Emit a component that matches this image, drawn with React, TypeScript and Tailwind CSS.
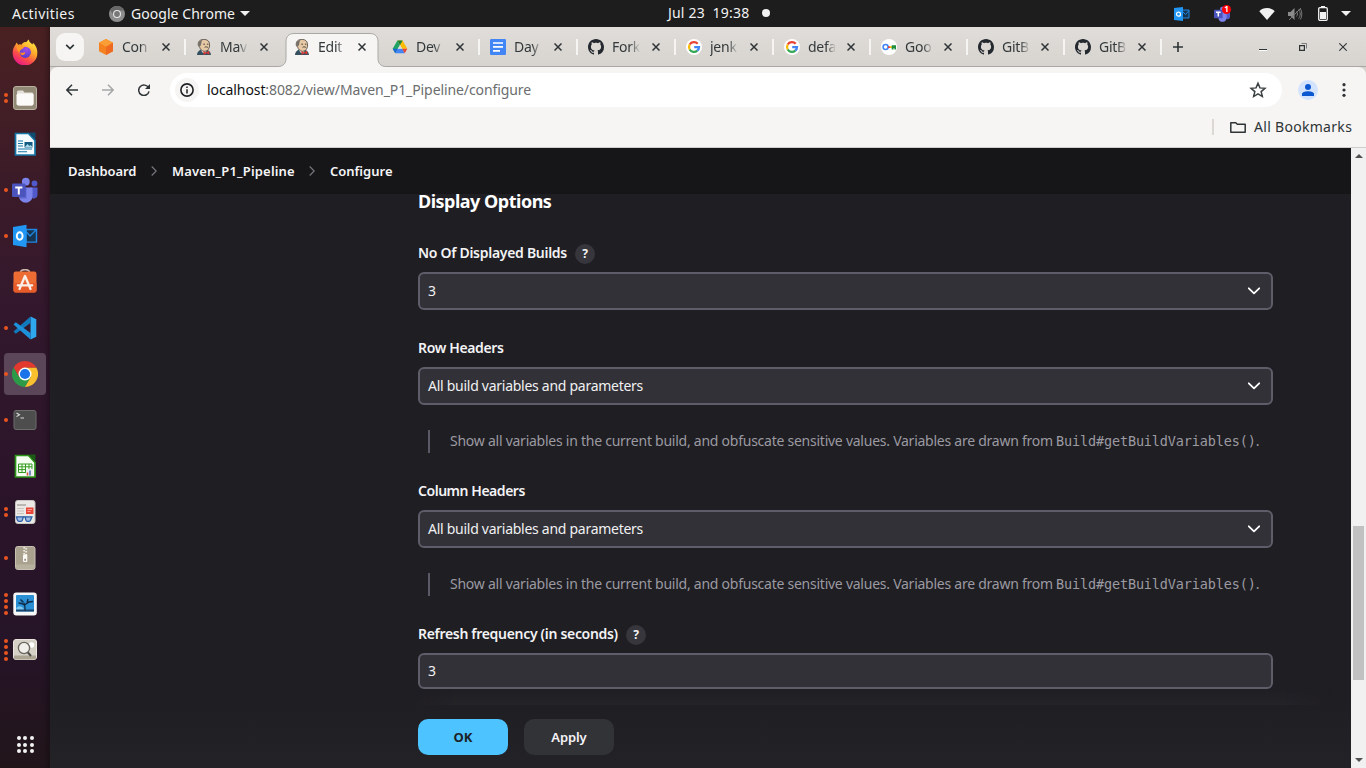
import type { ReactNode } from "react";

/* ---------- favicons ---------- */

const CubeIcon = () => (
  <svg viewBox="0 0 16 16" className="size-4">
    <path d="M8 0l7 3.8v8.4L8 16l-7-3.8V3.8z" fill="#f58220" />
    <path d="M8 0l7 3.8L8 7.8 1 3.8z" fill="#fb9d35" />
    <path d="M8 7.8l7-4v8.4L8 16z" fill="#ef6a21" />
  </svg>
);

const JenkinsIcon = () => (
  <svg viewBox="0 0 16 16" className="size-4">
    <path d="M1 16c0-2.500 1.500-4.500 4-5.500h5c3 .8 4.800 2.500 5 5.500z" fill="#35505f" />
    <path d="M5 10.500l1 2.500 3 2 2-4z" fill="#f4efe8" />
    <path d="M3 7.500C1.800 6.500 1.900 3.600 3.300 2 4.600.7 6.300.3 8.200.4c3 .1 5 1.600 5.300 4.400.2 1.700.1 3-.5 4.300-.8 2-2.300 3.200-4.500 3.200-2.600 0-4.300-2.300-4.800-4z" fill="#e6c9a4" stroke="#4a433c" strokeWidth=".8" />
    <path d="M3.300 7.800C2 6 2.200 3.700 3.500 2.200c1-.9 2-1.300 3.200-1.300C5.200 2.200 5.600 3.700 5.200 5c-.2 1-.6 2-1.400 2.500z" fill="#76706a" />
    <path d="M7.300 5.200H9M10.900 5.200h1.500M8.600 8.300c1-.6 2.200-.6 3.300.1" stroke="#4a433c" strokeWidth="1" fill="none" />
    <path d="M7.300 12l2.700 1.500 3-1.700.5 3.600-3.200-1.100-2.600 1.600z" fill="#d33833" />
  </svg>
);

const DriveIcon = () => (
  <svg viewBox="0 0 16 16" className="size-4">
    <path d="M5.400 1.500L8 6 3.300 14.200.7 9.800z" fill="#1ea362" />
    <path d="M10.600 1.500l4.700 8.300h-5.100L5.500 1.500z" fill="#fbbc04" />
    <path d="M5.400 1.500L8 6l2.600-4.500z" fill="#188038" />
    <path d="M.7 9.800h5.100l-2.500 4.400z" fill="#1967d2" />
    <path d="M5.700 9.800h4.600l2.400 4.400H3.300z" fill="#4285f4" />
    <path d="M10.200 9.800h5.100l-2.600 4.400z" fill="#ea4335" />
    <path d="M8 6l2.200 3.800H5.700z" fill="#dedbd7" />
  </svg>
);

const DocsIcon = () => (
  <svg viewBox="0 0 16 16" className="size-4">
    <rect width="16" height="16" rx="1.300" fill="#4285f4" />
    <path d="M3 4h10M3 7.900h10M3 11.800h7" stroke="#fff" strokeWidth="1.700" />
  </svg>
);

const GithubIcon = () => (
  <svg viewBox="0 0 16 16" className="size-4" fill="#24292f">
    <path d="M8 0C3.580 0 0 3.580 0 8c0 3.540 2.290 6.530 5.470 7.590.4.070.55-.17.55-.38 0-.19-.01-.82-.01-1.490-2.010.37-2.530-.49-2.690-.94-.09-.23-.48-.94-.82-1.130-.28-.15-.68-.52-.01-.53.63-.01 1.080.58 1.230.82.72 1.210 1.870.87 2.330.66.07-.52.28-.87.51-1.070-1.780-.2-3.640-.89-3.640-3.950 0-.87.31-1.590.82-2.150-.08-.2-.36-1.020.08-2.120 0 0 .67-.21 2.200.82.64-.18 1.320-.27 2-.27s1.360.09 2 .27c1.530-1.040 2.200-.82 2.200-.82.44 1.100.16 1.920.08 2.120.51.56.82 1.270.82 2.150 0 3.070-1.870 3.750-3.650 3.950.29.25.54.73.54 1.480 0 1.070-.01 1.930-.01 2.200 0 .21.15.46.55.38A8.010 8.010 0 0 0 16 8c0-4.420-3.580-8-8-8z" />
  </svg>
);

const GoogleIcon = () => (
  <svg viewBox="0 0 16 16" className="size-4">
    <circle cx="8" cy="8" r="8" fill="#fff" />
    <g fill="none" strokeWidth="2.300">
      <path d="M11.700 4.800A5 5 0 0 0 3.700 5.500" stroke="#ea4335" />
      <path d="M3.700 5.500a5 5 0 0 0 0 5" stroke="#fbbc05" />
      <path d="M3.700 10.500a5 5 0 0 0 7.600 1.200" stroke="#34a853" />
      <path d="M11.300 11.700A5 5 0 0 0 13 8.100H8.200" stroke="#4285f4" />
    </g>
  </svg>
);

const KeyIcon = () => (
  <svg viewBox="0 0 16 16" className="size-4">
    <circle cx="8" cy="8" r="8" fill="#fff" />
    <circle cx="4.600" cy="8" r="2.500" fill="none" stroke="#4285f4" strokeWidth="1.600" />
    <path d="M7 7.200h2v1.700H7z" fill="#ea4335" />
    <path d="M9 7.200h2v1.700H9z" fill="#fbbc05" />
    <path d="M10.700 6.300h4.300v4.200h-1.500V9.300h-1v1.200h-1.800z" fill="#1e8e3e" />
  </svg>
);

const CloseIcon = () => (
  <svg viewBox="0 0 8 8" className="size-2 shrink-0">
    <path d="M.5.5l7 7M7.500.5l-7 7" stroke="#2e3436" strokeWidth="1.500" />
  </svg>
);

/* ---------- dock icons, drawn on a 26px grid ---------- */

const Dock26 = ({ children }: { children: ReactNode }) => (
  <svg viewBox="0 0 26 26" className="size-[26px]">{children}</svg>
);

const Teams = () => (
  <Dock26>
    <circle cx="22.500" cy="6.500" r="2.900" fill="#5059c9" />
    <path d="M18 10.500h7.500v7a3.800 3.800 0 0 1-7.500 1z" fill="#5059c9" />
    <circle cx="13.800" cy="4.700" r="3.900" fill="#7b83eb" />
    <path d="M7 10.500h13.500V19a6.700 6.700 0 0 1-13.500 0z" fill="#7b83eb" />
    <path d="M7 10.500h7.500v11H8z" fill="#5d65cf" />
    <rect x="0" y="6.500" width="13.500" height="13.500" rx="1.300" fill="#4b53bc" />
    <path d="M3.200 9.500h7.200v1.900H7.800v6H5.800v-6H3.200z" fill="#fff" />
  </Dock26>
);

const Outlook = () => (
  <Dock26>
    <path d="M14 6.500h10.500v12.600H14z" fill="#173450" stroke="#1e88e5" strokeWidth="1.400" />
    <path d="M14 8.500l4 4.500 6-6" stroke="#1e88e5" strokeWidth="1.300" fill="none" />
    <path d="M1 4l13.500-2.200v22.400L1 22z" fill="#2196f3" />
    <ellipse cx="7.700" cy="13" rx="2.900" ry="3.700" fill="none" stroke="#fff" strokeWidth="1.900" />
  </Dock26>
);

const Firefox = () => (
  <Dock26>
    <defs>
      <linearGradient id="ffx" x1=".85" y1=".05" x2=".3" y2="1">
        <stop offset="0" stopColor="#ffee45" />
        <stop offset=".4" stopColor="#ffa62a" />
        <stop offset=".7" stopColor="#fb4b4b" />
        <stop offset="1" stopColor="#e8178a" />
      </linearGradient>
      <radialGradient id="ffc" cx=".6" cy=".2" r=".9">
        <stop offset="0" stopColor="#a34ce8" />
        <stop offset="1" stopColor="#473bc8" />
      </radialGradient>
    </defs>
    <path d="M3 6.500l1.700-3 1.500 2.400c1-.4 2.200-.5 3.300-.2C11 3 13 2.500 14.300 3.200 15 2 15.800 1 16.800.4c.2 2.600 2.200 3.600 3.900 5l.2-1.700c3 2.800 4.700 6.400 4.400 10.300A12.300 12.300 0 0 1 .7 14.300C.5 11.400 1.400 8.700 3 6.500z" fill="url(#ffx)" />
    <circle cx="13.300" cy="13.300" r="5.600" fill="url(#ffc)" />
    <path d="M6.200 6c2.200-.8 5 .1 5.800 1.700-.1 1.500-1.600 2-3 3-.8.700-1.500 1.500-1.200 3C5 12 4.500 8.500 6.200 6z" fill="#ff9a26" />
    <path d="M6.500 12c1.300 2 3.500 2.500 6.500 1 .5 1.500-.8 3.200-3.200 3.300" fill="#ff8a2a" />
  </Dock26>
);

const Files = () => (
  <Dock26>
    <rect x="1.500" y="1.500" width="23" height="23" rx="2.500" fill="#918876" stroke="#b9b19f" />
    <path d="M5 7a1.500 1.500 0 0 1 1.500-1.500h4.500l1.500 2h7.500A1.500 1.500 0 0 1 21.500 9v9.500a2 2 0 0 1-2 2h-12a2 2 0 0 1-2-2z" fill="#e3dfd8" />
    <rect x="4.500" y="8.500" width="17" height="12" rx="1.800" fill="#fbfaf8" />
  </Dock26>
);

const Writer = () => (
  <Dock26>
    <path d="M3.500 2.500h13l6.500 7v14.500H3.500z" fill="#f5fbff" stroke="#1577a8" strokeWidth="1.700" />
    <path d="M17 1.500h6.500v7.500z" fill="#0e4d70" />
    <path d="M6 10h5M6 12.500h5M6 15h5M6 18h14M6 20.800h9" stroke="#1577a8" strokeWidth="1.100" />
    <rect x="12.500" y="11" width="8" height="5.500" fill="#145b82" />
    <path d="M13 16l2.500-3 2 2 1-1 2 2z" fill="#a9d9ef" />
  </Dock26>
);

const Software = () => (
  <Dock26>
    <path d="M8.500 3.500c0-3.800 9-3.800 9 0" fill="none" stroke="#c8b7a8" strokeWidth="1.600" />
    <rect x="1.500" y="2.500" width="23" height="21" rx="2.200" fill="#ed6c34" />
    <path d="M1.500 14h23v7.500a2 2 0 0 1-2 2h-19a2 2 0 0 1-2-2z" fill="#e65b29" />
    <path d="M7.500 20L13 7l5.500 13M5.800 16.300h14.400" stroke="#fbeee8" strokeWidth="2.300" fill="none" strokeLinecap="round" strokeLinejoin="round" />
  </Dock26>
);

const VsCode = () => (
  <Dock26>
    <path d="M18.500 1.500l5.800 2.700v17.600l-5.800 2.700z" fill="#2fa7ee" />
    <path d="M18.500 1.500L1.500 16.500l2.300 2.200L18.500 8z" fill="#1279bd" />
    <path d="M18.500 24.500L1.500 9.500l2.300-2.200L18.500 18z" fill="#1d92db" />
  </Dock26>
);

const Chrome = () => (
  <Dock26>
    <path d="M1.740 6.500A13 13 0 0 0 13 26l5.630-9.700L13 13 7.400 16.300z" fill="#2d9a48" />
    <path d="M13 6.500h11.260A13 13 0 0 1 13 26l5.630-9.700z" fill="#fbc02d" />
    <path d="M13 6.500h11.260A13 13 0 0 0 1.740 6.500l5.630 9.750z" fill="#e23a2e" />
    <circle cx="13" cy="13" r="6.500" fill="#fff" />
    <circle cx="13" cy="13" r="5.100" fill="#1a73e8" />
  </Dock26>
);

const TerminalApp = () => (
  <Dock26>
    <rect x="2" y="3.500" width="22" height="19" rx="2" fill="#4d4d4d" stroke="#6c6c6c" />
    <path d="M4.500 6l3 1.800-3 1.800M8.500 11h3.500" stroke="#dcdcdc" strokeWidth="1.100" fill="none" />
  </Dock26>
);

const Calc = () => (
  <Dock26>
    <path d="M3.500 2.500h13l6.500 7v14.500H3.500z" fill="#f5fff2" stroke="#2c9418" strokeWidth="1.700" />
    <path d="M17 1.500h6.500v7.500z" fill="#1d5c14" />
    <path d="M6.500 11h13.500v8.500H6.500zM6.500 13.800H20M6.500 16.600H20M10 11v8.500M13.500 11v8.500M17 11v8.500" stroke="#339b20" strokeWidth="1" fill="none" />
    <rect x="14" y="16" width="7" height="7" fill="#eee" />
    <path d="M15.500 22.500v-3" stroke="#d4572a" strokeWidth="1.500" />
    <path d="M18 22.500v-5" stroke="#4472b8" strokeWidth="1.500" />
  </Dock26>
);

const DocViewer = () => (
  <Dock26>
    <rect x="3.500" y="1.500" width="19.500" height="23" rx="2.200" fill="#ebe9e6" stroke="#c9c5c0" />
    <path d="M5 9.500h7M5 12h7M5 14.500h7" stroke="#c8c4bf" strokeWidth="1.100" />
    <path d="M5 6h9" stroke="#aaa59f" strokeWidth="1.500" />
    <rect x="14" y="8.500" width="7.500" height="6.500" fill="#ea4438" />
    <path d="M15.500 10.500h4.500M15.500 12.500h3" stroke="#ffb4ab" strokeWidth=".8" />
    <path d="M4.500 17.800h6.700l-.7 3a2 2 0 0 1-2 1.500H7.300a2 2 0 0 1-2-1.500zM13.200 17.800h6.700l-1.200 3a2 2 0 0 1-2 1.500h-1.200a2 2 0 0 1-1.700-1.500z" fill="#9dbbe2" stroke="#2b5fa5" strokeWidth="1.300" />
    <path d="M11 18h2.400" stroke="#2b5fa5" strokeWidth="1.300" />
  </Dock26>
);

const Archive = () => (
  <Dock26>
    <rect x="3.500" y="1.500" width="19.500" height="23" rx="2.200" fill="#aaa28f" stroke="#c9c2b2" />
    <path d="M4 19.500h18.500v2.500a2 2 0 0 1-2 2H6a2 2 0 0 1-2-2z" fill="#b8b19f" />
    <path d="M12.200 2v8M14.200 3v7" stroke="#f0ece2" strokeWidth="1.800" strokeDasharray="1.500 1.500" />
    <rect x="11" y="9.500" width="4.300" height="7.500" rx="1" fill="#fbfaf7" />
    <rect x="12.300" y="13.800" width="1.700" height="2" fill="#999180" />
  </Dock26>
);

const ImageViewer = () => (
  <Dock26>
    <rect x="1.300" y="1.500" width="23.500" height="23" rx="3" fill="#f7f7f7" />
    <rect x="4" y="4" width="18" height="16.500" rx=".8" fill="#2b8fd6" />
    <path d="M4 19c0-5 7-5 8 0z" fill="#7cc6f0" />
    <path d="M4 18.500h18v2H4z" fill="#17456d" />
    <path d="M13 19.500c.2-4 0-5-1-7.500M12.500 14l4.500-3 4-.5M12.500 14c-2-1.500-3-2-6-2M11.500 11.500l-3-3M15 12.300l1-4.300" stroke="#102b45" strokeWidth="1.400" fill="none" />
  </Dock26>
);

const Magnifier = () => (
  <Dock26>
    <rect x="1.500" y="2.500" width="23" height="20" rx="2.500" fill="#d5d1c7" stroke="#eae6df" />
    <path d="M2 18.500h22v2a2 2 0 0 1-2 2H4a2 2 0 0 1-2-2z" fill="#aca592" />
    <circle cx="19.500" cy="8" r="2.800" fill="#fff" />
    <path d="M15.500 15l3.500 4" stroke="#4d4b46" strokeWidth="1.900" />
    <circle cx="12" cy="11" r="5.600" fill="#f1efe9" stroke="#68665f" strokeWidth="1.300" />
  </Dock26>
);

/* ---------- shell ---------- */

const dockItems: { icon: ReactNode; dots: number; active?: boolean }[] = [
  { icon: <Firefox />, dots: 0 },
  { icon: <Files />, dots: 2 },
  { icon: <Writer />, dots: 0 },
  { icon: <Teams />, dots: 1 },
  { icon: <Outlook />, dots: 1 },
  { icon: <Software />, dots: 0 },
  { icon: <VsCode />, dots: 1 },
  { icon: <Chrome />, dots: 1, active: true },
  { icon: <TerminalApp />, dots: 1 },
  { icon: <Calc />, dots: 0 },
  { icon: <DocViewer />, dots: 2 },
  { icon: <Archive />, dots: 1 },
  { icon: <ImageViewer />, dots: 4 },
  { icon: <Magnifier />, dots: 4 },
];

function Dock() {
  return (
    <aside className="flex w-[50px] shrink-0 flex-col bg-[linear-gradient(#4a2122,#3c1b28_20%,#33182d_38%,#2a1429_65%,#261428_82%,#21151a)] pt-[2px] shadow-[inset_-6px_0_6px_-4px_rgba(0,0,0,0.35)]">
      {dockItems.map((item, i) => (
        <div key={i} className="relative flex h-[46px] shrink-0 items-center justify-center">
          <div className={item.active ? "flex size-[42px] items-center justify-center rounded-[4px] bg-[#5a4559]" : "flex size-[42px] items-center justify-center"}>
            {item.icon}
          </div>
          <div className="absolute inset-y-0 left-1 flex flex-col items-center justify-center gap-[1.700px]">
            {Array.from({ length: item.dots }, (_, d) => (
              <span key={d} className="size-[4px] rounded-full bg-[#e95420]" />
            ))}
          </div>
        </div>
      ))}
      <div className="mt-[63px] grid grid-cols-[repeat(3,4px)] justify-center gap-[2.500px]">
        {Array.from({ length: 9 }, (_, d) => (
          <span key={d} className="size-[4px] rounded-full bg-[#f2f2f2]" />
        ))}
      </div>
    </aside>
  );
}

function TopBar() {
  return (
    <header className="grid h-[27px] shrink-0 grid-cols-[1fr_auto_1fr] items-center bg-[#1d1d1d] text-[14px] leading-[26px] text-[#f2f2f2]">
      <div className="flex items-center pl-3">
        <span className="w-[97px] tracking-[0.450px]">Activities</span>
        <svg viewBox="0 0 16 16" className="size-4">
          <circle cx="8" cy="8" r="8" fill="#8d8d8d" />
          <path d="M8 4.500h7.200A8 8 0 0 0 1.200 4L5 10z" fill="#686868" />
          <circle cx="8" cy="8" r="4" fill="#e8e8e8" />
          <circle cx="8" cy="8" r="2.900" fill="#777" />
        </svg>
        <span className="ml-[6px] w-[106px] tracking-[0.050px]">Google Chrome</span>
        <svg viewBox="0 0 10 5" className="ml-[3px] h-[5px] w-[10px]"><path d="M0 0h10L5 5z" fill="#f2f2f2" /></svg>
      </div>
      <div className="flex items-center gap-3 pb-px pl-[72px]">
        <span className="w-[82px] whitespace-pre tracking-[0.200px]">Jul 23  19:38</span>
        <span className="size-2 rounded-full bg-[#f2f2f2]" />
      </div>
      <div className="flex items-center justify-end pr-[15px]">
        <svg viewBox="0 0 16 14" className="h-[14px] w-4">
          <path d="M8 3h7v8H8z" fill="#15344f" stroke="#1e88e5" />
          <path d="M8.500 4.500l3 3 3.500-4" stroke="#1e88e5" fill="none" />
          <path d="M0 1l9-1v14l-9-1z" fill="#2196f3" />
          <circle cx="4.500" cy="7.200" r="2" fill="none" stroke="#fff" strokeWidth="1.200" />
        </svg>
        <div className="relative ml-6 h-4 w-4">
          <svg viewBox="0 0 26 26" className="size-4">
            <path d="M18 10.500h8v7a3.800 3.800 0 0 1-7.500 1z" fill="#5059c9" />
            <circle cx="13.800" cy="5" r="3.900" fill="#7b83eb" />
            <path d="M7 9.500h13.500V19a6.700 6.700 0 0 1-13.500 0z" fill="#7b83eb" />
            <rect y="6" width="14" height="14" rx="1.300" fill="#4b53bc" />
            <path d="M3.200 9h7.600v2.200H8.200v6H5.800v-6H3.200z" fill="#fff" />
          </svg>
          <span className="absolute -top-[1px] left-2 flex size-[9px] items-center justify-center rounded-full bg-[#f00] text-[8px] leading-none font-bold text-white">1</span>
        </div>
        <svg viewBox="0 0 16 12" className="ml-[29px] h-3 w-4"><path d="M.3 3.200C4-1 12-1 15.700 3.200L8 12z" fill="#f2f2f2" /></svg>
        <svg viewBox="0 0 16 14" className="ml-3 h-[14px] w-4">
          <path d="M1 5h2.500L7.500 1v12l-4-4H1z" fill="#8b8b8b" />
          <path d="M9.500 4.500c1.300 1.500 1.300 3.500 0 5M11.500 2.500c2.300 2.500 2.300 6.500 0 9M13.300 1.500c2 3 2 8 0 11M2 13L14 1" stroke="#777" fill="none" />
        </svg>
        <svg viewBox="0 0 10 15" className="ml-[15px] h-[15px] w-[10px]">
          <rect x=".7" y="1.700" width="8.600" height="12.600" rx="1.200" fill="none" stroke="#f2f2f2" strokeWidth="1.300" />
          <path d="M3 0h4v2H3zM2 6h6v7H2z" fill="#f2f2f2" />
        </svg>
        <svg viewBox="0 0 10 5" className="ml-[13px] h-[5px] w-[10px]"><path d="M0 0h10L5 5z" fill="#f2f2f2" /></svg>
      </div>
    </header>
  );
}

const tabs: { icon: ReactNode; title: string; active?: boolean; line?: boolean }[] = [
  { icon: <CubeIcon />, title: "Con", line: true },
  { icon: <JenkinsIcon />, title: "Mav" },
  { icon: <JenkinsIcon />, title: "Edit", active: true },
  { icon: <DriveIcon />, title: "Dev", line: true },
  { icon: <DocsIcon />, title: "Day", line: true },
  { icon: <GithubIcon />, title: "Fork", line: true },
  { icon: <GoogleIcon />, title: "jenk", line: true },
  { icon: <GoogleIcon />, title: "defa", line: true },
  { icon: <KeyIcon />, title: "Goo", line: true },
  { icon: <GithubIcon />, title: "GitB", line: true },
  { icon: <GithubIcon />, title: "GitB", line: true },
];

function TabStrip() {
  return (
    <div className="flex h-10 shrink-0 items-center border-b border-[#aaa8a5] bg-linear-to-b from-[#e0ddda] to-[#d7d4cf] pl-[6px] text-[14px] text-[#33393b]">
      <div className="flex size-7 items-center justify-center rounded-[9px] bg-[#f6f5f4]">
        <svg viewBox="0 0 10 6" className="h-[6px] w-[10px]"><path d="M1.200 .8L5 4.500 8.800 .8" stroke="#2e3436" strokeWidth="1.700" fill="none" /></svg>
      </div>
      <div className="ml-1 flex h-full">
        {tabs.map((t, i) => (
          <div key={i} className={i < 7 ? "relative flex h-full w-[98px] items-center pl-[10px]" : "relative flex h-full w-[97px] items-center pl-[10px]"}>
            {t.active && (
              <svg viewBox="0 0 108 34" className="absolute top-[6px] -left-[6px] h-[34px] w-[108px]">
                <path d="M0 33.500c5 0 8-3 8-8V8.500c0-5 3-8 8-8h76c5 0 8 3 8 8v17c0 5 3 8 8 8V34H0z" fill="#f6f5f4" />
                <path d="M0 33.500c5 0 8-3 8-8V8.500c0-5 3-8 8-8h76c5 0 8 3 8 8v17c0 5 3 8 8 8" fill="none" stroke="#aaa8a5" />
              </svg>
            )}
            <span className="relative">{t.icon}</span>
            <span className="relative ml-2 w-[28px] overflow-hidden whitespace-nowrap tracking-[-0.250px] mask-r-from-65% mask-r-to-100%">{t.title}</span>
            <span className={i < 7 ? "relative ml-3 flex" : "relative ml-[11px] flex"}><CloseIcon /></span>
            {t.line && <span className="ml-auto h-4 w-[2px] bg-[#f6f5f4]" />}
          </div>
        ))}
      </div>
      <svg viewBox="0 0 10 10" className="ml-[11px] size-[10px]"><path d="M5 0v10M0 5h10" stroke="#2e3436" strokeWidth="1.600" /></svg>
      <div className="ml-auto flex items-center pr-[19px]">
        <svg viewBox="0 0 8 8" className="size-2"><path d="M0 6.500h8" stroke="#2e3436" /><path d="M0 7.500h8" stroke="#fff" /></svg>
        <svg viewBox="0 0 8 8" className="ml-8 size-2"><path d="M.6 2.600h4.800v4.800H.6z" fill="none" stroke="#2e3436" strokeWidth="1.200" /><path d="M2.500.5h5v5" fill="none" stroke="#7c7f80" /></svg>
        <svg viewBox="0 0 8 8" className="ml-8 size-2"><path d="M.3.3l7.400 7.400M7.700.3L.3 7.700" stroke="#2e3436" strokeWidth="1.100" /></svg>
      </div>
    </div>
  );
}

function Toolbar() {
  return (
    <div className="bg-[#d7d4cf]">
      <div className="flex h-[46px] shrink-0 items-center rounded-t-[8px] bg-[#f6f5f4] pr-5 pl-4">
        <svg viewBox="0 0 12 12" className="size-3"><path d="M12 6H1M6 .8L.9 6 6 11.200" stroke="#2e3436" strokeWidth="1.500" fill="none" /></svg>
        <svg viewBox="0 0 12 12" className="ml-6 size-3"><path d="M0 6h11M6 .8L11.100 6 6 11.200" stroke="#a5a6a6" strokeWidth="1.500" fill="none" /></svg>
        <svg viewBox="0 0 12 12" className="ml-6 size-3"><path d="M10.600 4A5.200 5.200 0 1 0 11 7.300" stroke="#2e3436" strokeWidth="1.500" fill="none" /><path d="M12 0v5H7z" fill="#2e3436" /></svg>
        <div className="ml-5 flex h-[34px] flex-1 items-center rounded-full bg-white pr-[15px] pl-[5px]">
          <span className="flex size-6 items-center justify-center rounded-full bg-[#f6f5f4]">
            <svg viewBox="0 0 14 14" className="size-[14px]"><circle cx="7" cy="7" r="6.100" fill="none" stroke="#202124" strokeWidth="1.600" /><path d="M7 6.200v4.300M7 3.400v1.700" stroke="#202124" strokeWidth="1.500" /></svg>
          </span>
          <span className="ml-2 pb-[2px] text-[14px] tracking-[-0.090px] whitespace-nowrap text-[#6b6d6e]"><span className="text-[#101213]">localhost</span>:8082/view/Maven_P1_Pipeline/configure</span>
          <svg viewBox="0 0 24 24" className="ml-auto size-[18px]" fill="none" stroke="#3a3f41" strokeWidth="2"><path d="M12 3l2.600 6.200 6.700.5-5.100 4.400 1.600 6.600L12 17.200l-5.800 3.500 1.600-6.600-5.100-4.400 6.700-.5z" /></svg>
        </div>
        <span className="ml-4 flex size-5 items-center justify-center rounded-full bg-[#d3e3fd]">
          <svg viewBox="0 0 12 12" className="size-3" fill="#0b57d0"><circle cx="6" cy="3" r="3" /><path d="M0 12V9.800C0 8 3.500 7.200 6 7.200S12 8 12 9.800V12z" /></svg>
        </span>
        <svg viewBox="0 0 4 14" className="ml-6 h-[14px] w-1" fill="#2e3436"><circle cx="2" cy="1.700" r="1.600" /><circle cx="2" cy="7" r="1.600" /><circle cx="2" cy="12.300" r="1.600" /></svg>
      </div>
    </div>
  );
}

function BookmarksBar() {
  return (
    <div className="flex h-[35px] shrink-0 items-center justify-end border-b border-[#cfcdca] bg-[#f6f5f4] pr-[14px] pb-[7px] text-[14px] text-[#2e3436]">
      <span className="h-4 w-[2px] bg-[#dcd9d5]" />
      <svg viewBox="0 0 16 12" className="ml-4 h-3 w-4"><path d="M.8 10V1.700h5L7.300 3.200h7.900v8H.8z" fill="none" stroke="#2e3436" strokeWidth="1.500" strokeLinejoin="round" /></svg>
      <span className="ml-2 w-[98px] whitespace-nowrap tracking-[0.300px]">All Bookmarks</span>
    </div>
  );
}

/* ---------- Jenkins page ---------- */

const Crumb = () => (
  <svg viewBox="0 0 6 10" className="h-[10px] w-[6px]"><path d="M.7.5L5.200 5 .7 9.500" stroke="#76767c" strokeWidth="1.200" fill="none" /></svg>
);

function Label({ text, help, className }: { text: string; help?: boolean; className: string }) {
  return (
    <div className="mb-[9px] flex h-5 items-center">
      <span className={"text-[14px] leading-5 font-semibold whitespace-nowrap text-[#f3f3f5] " + className}>{text}</span>
      {help && <span className="mt-[2px] ml-2 flex size-5 shrink-0 items-center justify-center rounded-full bg-[#37363c] text-[12px] font-bold text-[#f3f3f5]">?</span>}
    </div>
  );
}

function Select({ value }: { value: string }) {
  return (
    <div className="flex h-[38px] items-center justify-between rounded-[6px] border-2 border-[#5e5d69] bg-[#323137] pr-[11px] pl-2 text-[14px] text-[#f0f0f2]">
      <span className="pb-[2px] tracking-[-0.270px]">{value}</span>
      <svg viewBox="0 0 12 8" className="h-2 w-3"><path d="M.8 1.300L6 6.300l5.200-5" stroke="#fff" strokeWidth="1.800" fill="none" strokeLinecap="round" strokeLinejoin="round" /></svg>
    </div>
  );
}

function Help() {
  return (
    <div className="mt-[25px] ml-[10px] flex h-[23px] items-center border-l-2 border-[#5a5965] pb-[2px] pl-5 text-[14px] whitespace-nowrap text-[#9b9aa1]">
      <span className="w-[606px] tracking-[-0.250px]">Show all variables in the current build, and obfuscate sensitive values. Variables are drawn from</span>
      <code className="pt-[2px] font-['DejaVu_Sans_Mono',monospace] text-[13.500px] tracking-[-0.140px]">Build#getBuildVariables()</code>.
    </div>
  );
}

function Page() {
  return (
    <div className="flex min-h-0 flex-1">
      <main className="flex min-w-0 flex-1 flex-col bg-[#1f1e23]">
        <nav className="flex h-[46px] shrink-0 items-center gap-[15px] bg-[#161618] pl-[18px] text-[13px] font-semibold whitespace-nowrap text-[#f5f5f7]">
          <span className="w-[68px] pt-px tracking-[-0.080px]">Dashboard</span>
          <Crumb />
          <span className="w-[122px] pt-px tracking-[0.180px]">Maven_P1_Pipeline</span>
          <Crumb />
          <span className="pt-px">Configure</span>
        </nav>
        <div className="flex h-[511px] shrink-0 flex-col pr-[78px] pl-[368px]">
          <h2 className="mb-[33px] h-4 text-[18px] leading-[15px] font-bold tracking-[-0.500px] whitespace-nowrap text-white">Display Options</h2>
          <Label text="No Of Displayed Builds" help className="w-[149px] tracking-[-0.290px]" />
          <Select value="3" />
          <div className="h-7" />
          <Label text="Row Headers" className="tracking-[-0.360px]" />
          <Select value="All build variables and parameters" />
          <Help />
          <div className="h-7" />
          <Label text="Column Headers" className="tracking-[-0.460px]" />
          <Select value="All build variables and parameters" />
          <Help />
          <div className="h-7" />
          <Label text="Refresh frequency (in seconds)" help className="w-[200px] tracking-[-0.310px]" />
          <div className="flex h-9 items-center rounded-[6px] border-2 border-[#5e5d69] bg-[#323137] pb-[2px] pl-2 text-[14px] text-[#f0f0f2]">3</div>
          <div className="-mr-[60px] -ml-[12px] h-4 bg-linear-to-b from-[#1f1e23] to-[#242328] mask-x-from-95%" />
        </div>
        <div className="flex flex-1 items-start gap-4 bg-linear-to-b from-[#1f1e23] to-[#232227] pt-[14px] pl-[368px] text-[13px]">
          <button className="h-9 w-[90px] rounded-[10px] bg-[#4dc3ff] pt-[2px] font-bold text-[#1c2126]">OK</button>
          <button className="h-9 w-[90px] rounded-[10px] bg-[#323337] pt-[2px] font-semibold tracking-[-0.100px] text-[#f5f5f7]">Apply</button>
        </div>
      </main>
      <div className="flex w-[15px] shrink-0 flex-col items-center bg-[#f1f1f1]">
        <svg viewBox="0 0 8 4" className="mt-[6px] h-1 w-2"><path d="M4 0l4 4H0z" fill="#505050" /></svg>
        <div className="mt-[368px] h-[154px] w-[11px] bg-[#c1c1c1]" />
        <svg viewBox="0 0 8 4" className="mt-auto mb-[6px] h-1 w-2"><path d="M0 0h8L4 4z" fill="#505050" /></svg>
      </div>
    </div>
  );
}

export default function App() {
  return (
    <div className="flex h-[768px] w-[1366px] flex-col overflow-hidden bg-[#1d1d1d] font-['Noto_Sans',sans-serif]">
      <TopBar />
      <div className="flex min-h-0 flex-1">
        <Dock />
        <div className="flex min-w-0 flex-1 flex-col">
          <TabStrip />
          <Toolbar />
          <BookmarksBar />
          <Page />
        </div>
      </div>
    </div>
  );
}
